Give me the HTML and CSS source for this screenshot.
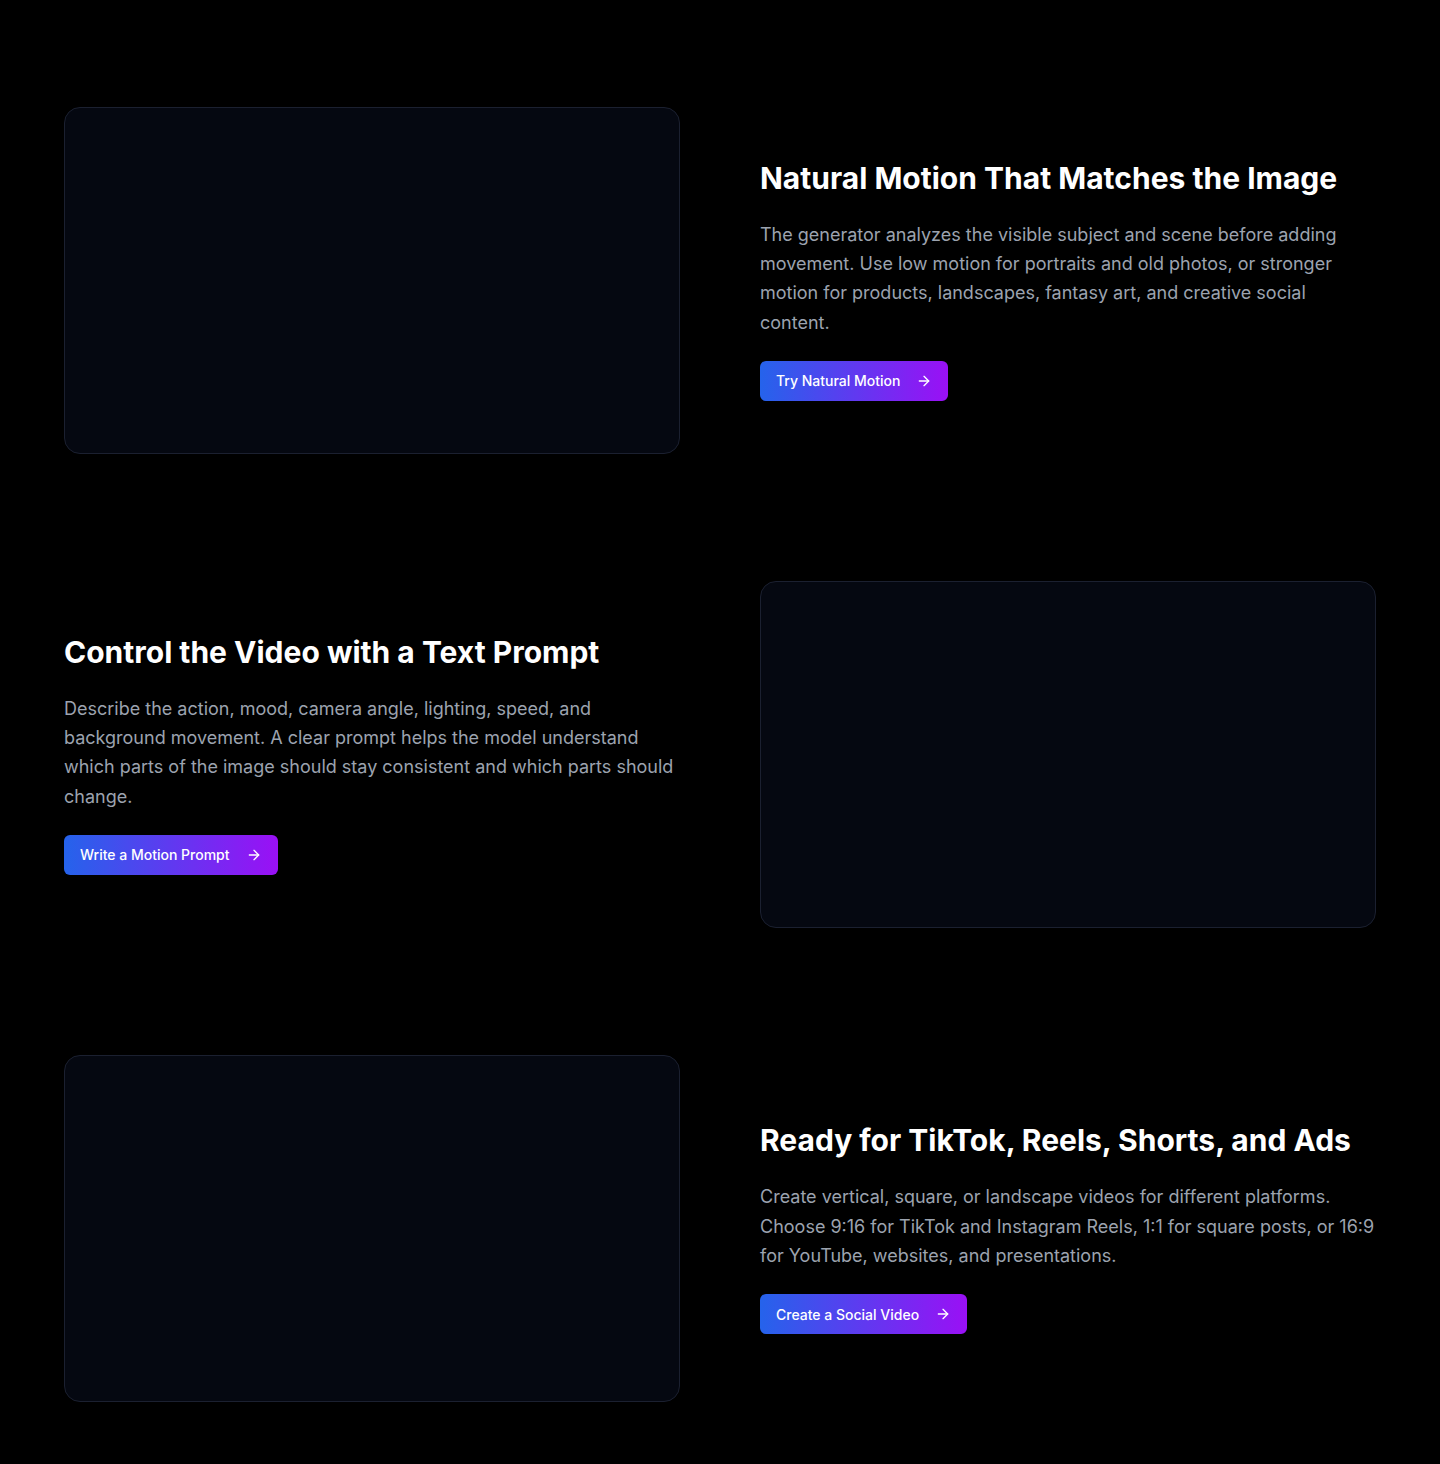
FILE: index.html
```html
<!DOCTYPE html>
<html lang="en">
<head>
<meta charset="utf-8">
<title>Features</title>
<link rel="stylesheet" href="styles.css">
</head>
<body>
<main class="features">
  <section class="row">
    <div class="media"></div>
    <div class="copy">
      <h2 class="title">Natural Motion That Matches the Image</h2>
      <p class="text">The generator analyzes the visible subject and scene before adding movement. Use low motion for portraits and old photos, or stronger motion for products, landscapes, fantasy art, and creative social content.</p>
      <a class="btn" href="#">Try Natural Motion
        <svg class="arrow" viewBox="0 0 24 24" width="16" height="16" fill="none" stroke="currentColor" stroke-width="2" stroke-linecap="round" stroke-linejoin="round"><path d="M5 12h14"/><path d="m12 5 7 7-7 7"/></svg>
      </a>
    </div>
  </section>
  <section class="row reverse">
    <div class="copy">
      <h2 class="title">Control the Video with a Text Prompt</h2>
      <p class="text">Describe the action, mood, camera angle, lighting, speed, and background movement. A clear prompt helps the model understand which parts of the image should stay consistent and which parts should change.</p>
      <a class="btn" href="#">Write a Motion Prompt
        <svg class="arrow" viewBox="0 0 24 24" width="16" height="16" fill="none" stroke="currentColor" stroke-width="2" stroke-linecap="round" stroke-linejoin="round"><path d="M5 12h14"/><path d="m12 5 7 7-7 7"/></svg>
      </a>
    </div>
    <div class="media"></div>
  </section>
  <section class="row">
    <div class="media"></div>
    <div class="copy">
      <h2 class="title">Ready for TikTok, Reels, Shorts, and Ads</h2>
      <p class="text">Create vertical, square, or landscape videos for different platforms. Choose 9:16 for TikTok and Instagram Reels, 1:1 for square posts, or 16:9 for YouTube, websites, and presentations.</p>
      <a class="btn" href="#">Create a Social Video
        <svg class="arrow" viewBox="0 0 24 24" width="16" height="16" fill="none" stroke="currentColor" stroke-width="2" stroke-linecap="round" stroke-linejoin="round"><path d="M5 12h14"/><path d="m12 5 7 7-7 7"/></svg>
      </a>
    </div>
  </section>
</main>
</body>
</html>
```
FILE: styles.css
```css
* { box-sizing: border-box; }
html, body {
  margin: 0;
  padding: 0;
  background: #000;
}
body {
  font-family: Inter, "Noto Sans", "Liberation Sans", sans-serif;
  color: #fff;
  -webkit-font-smoothing: antialiased;
}
.features {
  padding: 107px 64px 62px;
  display: flex;
  flex-direction: column;
  gap: 127.5px;
}
.row {
  display: grid;
  grid-template-columns: 1fr 1fr;
  column-gap: 80px;
  align-items: center;
}
.media {
  aspect-ratio: 16 / 9;
  width: 100%;
  background: #050811;
  border: 1px solid #1b2030;
  border-radius: 16px;
}
.copy {
  display: flex;
  flex-direction: column;
  align-items: flex-start;
}
.title {
  margin: 0 0 24px;
  font-size: 30px;
  line-height: 36px;
  font-weight: 700;
  color: #fff;
}
.text {
  margin: 0 0 24px;
  font-size: 18px;
  line-height: 29.25px;
  color: #9ca3af;
}
.btn {
  display: inline-flex;
  align-items: center;
  gap: 16px;
  height: 40px;
  padding: 0 16px;
  border-radius: 6px;
  background: linear-gradient(90deg, #2563eb, #9a10f5);
  color: #fff;
  font-size: 14px;
  font-weight: 500;
  text-decoration: none;
}
.arrow { display: block; flex: none; }
```
